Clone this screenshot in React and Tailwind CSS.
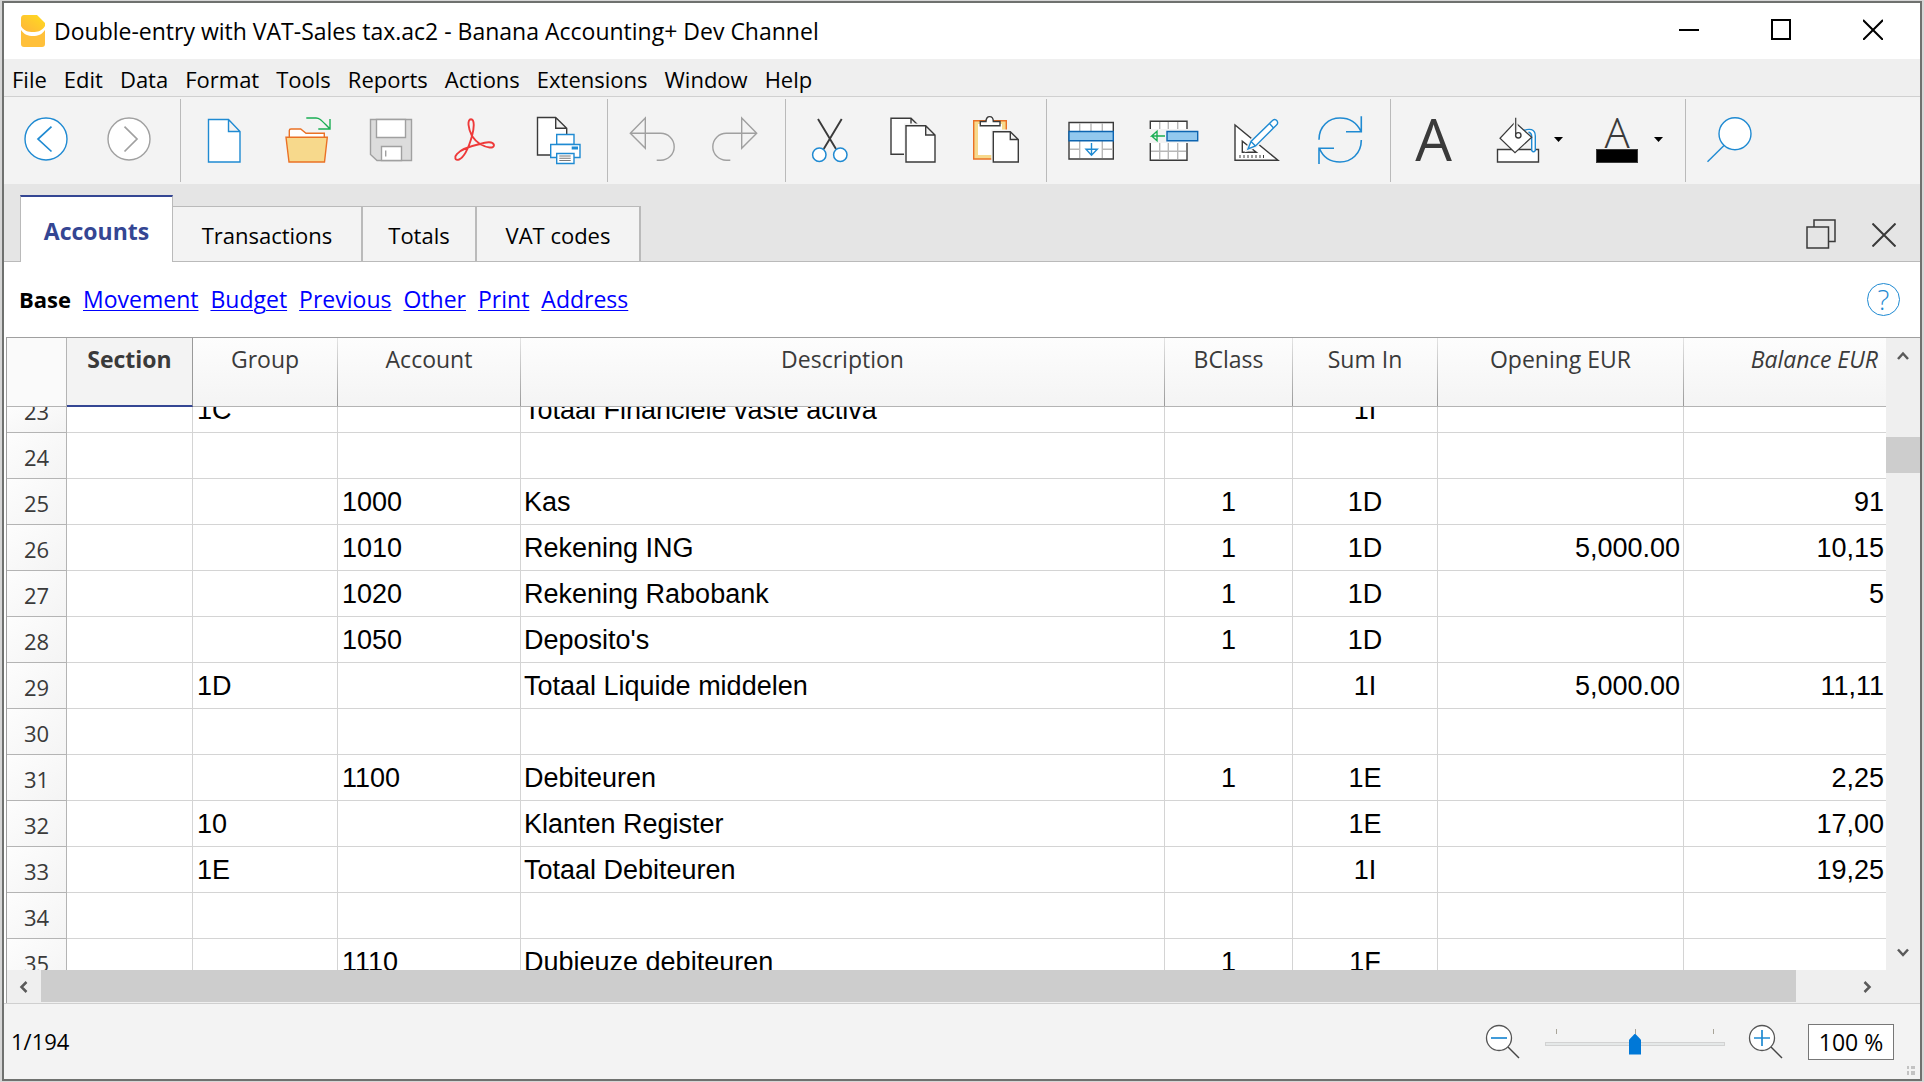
import React from "react";

const BLUE = "#1f8ad2";
const GREY = "#a0a0a0";
const DARK = "#3a3a3a";

function Icon({ children }) {
  return (
    <svg viewBox="0 0 48 48" fill="none" strokeWidth="1.4" className="h-12 w-12 shrink-0 overflow-visible" aria-hidden="true">
      {children}
    </svg>
  );
}

function Logo() {
  return (
    <svg viewBox="0 0 24 32" className="h-8 w-6" aria-hidden="true">
      <defs>
        <linearGradient id="peel" x1="0" y1="1" x2="1" y2="0">
          <stop offset="0" stopColor="#ffb43c" />
          <stop offset="1" stopColor="#ffdc1e" />
        </linearGradient>
      </defs>
      <path d="M0 3.500C0 1.500 1 0 3 0H16L24 8V11C21 16 16.500 17 12 17S2.500 16 0 11Z" fill="url(#peel)" />
      <path d="M0 15C3 19.500 7 21 12 21S21 19.500 24 15V29C24 31 23 32 21 32H3C1 32 0 31 0 29Z" fill="#ffc03a" />
    </svg>
  );
}

const icons = {
  back: (
    <g stroke={BLUE}>
      <circle cx="24" cy="23" r="21" fill="#fff" />
      <path d="M29.500 10.700 16 23 29.500 35.500" strokeWidth="1.700" />
    </g>
  ),
  forward: (
    <g stroke={GREY}>
      <circle cx="24" cy="23" r="21" fill="#fff" />
      <path d="M19.500 10.700 32 23 19.500 35.500" strokeWidth="1.700" />
    </g>
  ),
  newFile: (
    <path d="M8.500 3.500H28.500L40 15.500V46H8.500ZM28.500 3.500V15.500H40" stroke={BLUE} fill="#fff" />
  ),
  open: (
    <g>
      <path d="M6.300 22V14.500Q6.300 13 8 13H17.700L23 17.300H41.300V22" fill="#fff" stroke="#ea7125" />
      <path d="M3 21.300H44.300L41.500 46H6Z" fill="#f7d98c" stroke="#ea7125" />
      <path d="M23.300 2H33C37 2 38.500 4.500 47 13M47 3V13H35.300" stroke="#1aae54" />
    </g>
  ),
  save: (
    <g stroke={GREY}>
      <path d="M4.500 3.500H45.500V44.500H11L4.500 38.500Z" fill="#dcdcdc" />
      <path d="M10.500 3.500H39.500V21.500H10.500ZM15.500 44.500V30.500H35.500V44.500Z" fill="#fff" />
      <path d="M19.700 34.500V40.500" />
    </g>
  ),
  pdf: (
    <path
      d="M23 20C19 12 18 3.500 22 3.300C26 3.500 25 13 23 20C21 27 16 41 10 43.500C6 45 5 41 8 38C12 33 22 30 31 28C38 25.500 44 25.500 45 29C45 33 38 32 31 28C27 25.500 25 23 23 20Z"
      stroke="#ee3a3a"
      strokeWidth="1.900"
    />
  ),
  print: (
    <g>
      <path d="M5.500 1.500H23.700L34.700 12.300V39H5.500ZM23.700 1.500V12.300H34.700" fill="#fff" stroke={DARK} />
      <g stroke={BLUE} fill="#fff">
        <path d="M24.700 18.500H42V28.500H24.700Z" />
        <path d="M18.700 28.500H48V41.500H18.700Z" />
        <path d="M24.700 37.500H42V47.500H24.700Z" />
      </g>
      <path d="M39.700 30.500H46V33.500H39.700Z" fill={BLUE} />
      <path d="M27.300 40H38.700M27.300 42.300H38.700M27.300 44.500H38.700" stroke="#777" strokeWidth="1.100" />
    </g>
  ),
  undo: <path d="M18.300 2 3.300 17.300 18.300 32.300ZM3.300 17.300H33.700A13.500 13.500 0 0 1 33.700 44.300H29.700" stroke={GREY} />,
  redo: <path d="M31.700 2 46.700 17.300 31.700 32.300ZM46.700 17.300H16.300A13.500 13.500 0 0 0 16.300 44.300H20.300" stroke={GREY} />,
  cut: (
    <g>
      <path d="M13 3 31 33M36.700 3 18.700 33" stroke={DARK} strokeWidth="1.900" />
      <g fill="#fff" stroke={BLUE} strokeWidth="1.500">
        <circle cx="14.300" cy="38.700" r="6.700" />
        <circle cx="35.300" cy="38.700" r="6.700" />
      </g>
    </g>
  ),
  copy: (
    <g>
      <path d="M3 2.200H23L31 10V38.300H3ZM23 2.200V10H31" fill="#fff" stroke={DARK} />
      <path d="M16 7.500H40V47H16Z" fill="#f3f3f3" />
      <path d="M18 9.700H37.700L47 19V46H18ZM37.700 9.700V19H47" fill="#fff" stroke={DARK} />
    </g>
  ),
  paste: (
    <g>
      <path d="M2.700 4.700H35.300V43H2.700Z" fill="#f7d98c" stroke="#ea7125" />
      <path d="M7 8H31V39H7Z" fill="#fff" />
      <path d="M9.300 5.500H15C15 -1 22.300 -1 22.300 5.500H29V9.700H9.300Z" fill="#fff" stroke={DARK} />
      <path d="M20.300 13.500H38V47H20.300Z" fill="#f3f3f3" />
      <path d="M22.300 15.700H39.300L47.300 23.500V46H22.300ZM39.300 15.700V23.500H47.300" fill="#fff" stroke={DARK} />
    </g>
  ),
  insertRow: (
    <g>
      <path d="M3 6.500H47.300V43H3Z" fill="#fff" stroke={DARK} />
      <path d="M13.700 7V15M25 7V15M36.300 7V15M13.700 25V42M36.300 25V42M4 33.300H13.700M36.300 33.300H47" stroke="#b8b8b8" />
      <path d="M3 15.500H47.300V24.700H3Z" fill="#92c8ee" stroke="#0c64b0" />
      <path d="M25.500 27V39M20 33.300H31.300L25.500 39.300Z" stroke={BLUE} />
    </g>
  ),
  moveRow: (
    <g>
      <path d="M1.300 13V5.300H38V13M1.300 27V44.300H38V27" fill="#fff" stroke={DARK} />
      <path d="M10.700 6V13M19.300 6V13M28.700 6V13M10.700 27V43M19.300 27V43M28.700 27V43M2 35.300H37" stroke="#b8b8b8" />
      <path d="M18 15.500H48.700V24.700H18Z" fill="#92c8ee" stroke="#0c64b0" />
      <path d="M16 20H2.700L8 15.300V24.700L2.700 20" stroke="#1aae54" />
    </g>
  ),
  design: (
    <g>
      <path d="M3 9V44.300H46ZM10.300 25.300V36.300H24.300Z" fill="#fff" stroke={DARK} />
      <path d="M8 39V42M12 39V42M16 39V42M20 39V42M24 39V42M28 39V42M31.500 39V42" stroke={DARK} strokeWidth="1" />
      <path d="M16 33 19 25.500 40.500 4.500Q43 2.500 45 4.800Q46.500 7 44.500 9L23.500 30ZM19 25.500 23.500 30M37.500 7.500 41.500 12" fill="#fff" stroke="#f3f3f3" strokeWidth="4" />
      <path d="M16 33 19 25.500 40.500 4.500Q43 2.500 45 4.800Q46.500 7 44.500 9L23.500 30ZM19 25.500 23.500 30M37.500 7.500 41.500 12" fill="#fff" stroke={BLUE} />
    </g>
  ),
  refresh: (
    <path
      d="M4 23.700C4 10 14 2 25 2C35 2 42 7 46 15.500M31 15.700H46.300V.3M46.300 24C46.300 38 36 46 25 46C15 46 8 41 4.500 32.500M19 32.300H4V48"
      stroke={BLUE}
      strokeWidth="1.600"
    />
  ),
  fill: (
    <g>
      <path d="M4.500 33.500H45.500V46H4.500Z" fill="#fff" stroke={DARK} />
      <path d="M31 14.500C36 12.500 42.300 12.500 42.300 20V34.500Q40.500 37 38.700 34.500V20Q38.500 17 35.500 16" fill="#fff" stroke={BLUE} />
      <path d="M22 6.300 38.700 21.300 22 36.700 7 22.300Z" fill="#fff" stroke={DARK} strokeWidth="1.200" />
      <path d="M22.700 0V14" stroke="#f3f3f3" strokeWidth="4" />
      <path d="M22.700 1.700V18" stroke={DARK} strokeWidth="1.200" />
      <circle cx="25.300" cy="19.300" r="2.700" stroke={DARK} />
    </g>
  ),
  search: (
    <g stroke={BLUE}>
      <circle cx="30" cy="17.700" r="16" fill="#fff" />
      <path d="M19 29.500 2.500 45.700" />
    </g>
  ),
};

const toolbarGroups = [
  [["Back", "back"], ["Forward", "forward"]],
  [["New", "newFile"], ["Open", "open"], ["Save", "save"], ["Export PDF", "pdf"], ["Print", "print"]],
  [["Undo", "undo"], ["Redo", "redo"]],
  [["Cut", "cut"], ["Copy", "copy"], ["Paste", "paste"]],
  [["Add rows", "insertRow"], ["Insert rows", "moveRow"], ["Design", "design"], ["Recalculate", "refresh"]],
];

function ToolButton({ label, name }) {
  return (
    <button type="button" aria-label={label} className="flex w-[83px] items-center justify-center pb-0.5">
      <Icon>{icons[name]}</Icon>
    </button>
  );
}

function Separator() {
  return <div className="my-0.5 mr-px ml-[10px] w-px shrink-0 bg-[#bababa]" />;
}

function Caret() {
  return (
    <svg viewBox="0 0 9 5" className="h-[5px] w-[9px]" aria-hidden="true">
      <path d="M0 0H9L4.500 5Z" fill="#000" />
    </svg>
  );
}

function Toolbar() {
  return (
    <div role="toolbar" className="flex h-[88px] shrink-0 items-stretch border-t border-[#d0d0d0] bg-[#f3f3f3]">
      {toolbarGroups.map((group, i) => (
        <React.Fragment key={i}>
          {group.map(([label, name]) => (
            <ToolButton key={name} label={label} name={name} />
          ))}
          <Separator />
        </React.Fragment>
      ))}
      <button type="button" aria-label="Bold" className="flex w-[83px] items-center justify-center pb-1 text-[58px] leading-[48px] text-[#3a3a3a]">
        A
      </button>
      <button type="button" aria-label="Background colour" className="flex w-[101px] items-center gap-[13px] pb-0.5 pl-[18px]">
        <Icon>{icons.fill}</Icon>
        <Caret />
      </button>
      <button type="button" aria-label="Text colour" className="flex w-[99px] items-center gap-[13px] pb-0.5 pl-[17px]">
        <span className="flex h-12 w-12 flex-col items-center justify-end pb-px">
          <span className="font-['Open_Sans_Light','Open_Sans'] text-[42px] leading-[35px] font-light text-[#3a3a3a]">A</span>
          <span className="h-[14px] w-[42px] shrink-0 border border-[#3a3a3a] bg-black" />
        </span>
        <Caret />
      </button>
      <Separator />
      <ToolButton label="Search" name="search" />
    </div>
  );
}

const menus = ["File", "Edit", "Data", "Format", "Tools", "Reports", "Actions", "Extensions", "Window", "Help"];
const views = ["Movement", "Budget", "Previous", "Other", "Print", "Address"];

const rows = [
  [23, "1C", "", "Totaal Financiële vaste activa", "", "1I", "", ""],
  [24, "", "", "", "", "", "", ""],
  [25, "", "1000", "Kas", "1", "1D", "", "91"],
  [26, "", "1010", "Rekening ING", "1", "1D", "5,000.00", "10,15"],
  [27, "", "1020", "Rekening Rabobank", "1", "1D", "", "5"],
  [28, "", "1050", "Deposito's", "1", "1D", "", ""],
  [29, "1D", "", "Totaal Liquide middelen", "", "1I", "5,000.00", "11,11"],
  [30, "", "", "", "", "", "", ""],
  [31, "", "1100", "Debiteuren", "1", "1E", "", "2,25"],
  [32, "10", "", "Klanten Register", "", "1E", "", "17,00"],
  [33, "1E", "", "Totaal Debiteuren", "", "1I", "", "19,25"],
  [34, "", "", "", "", "", "", ""],
  [35, "", "1110", "Dubieuze debiteuren", "1", "1F", "", ""],
];

function Cell({ children, clipped, className = "px-[3px]" }) {
  return (
    <td className="border-r border-b border-[#d4d4d4] p-0 last:border-r-0">
      <div className={`flex items-end overflow-hidden ${clipped ? "h-[25px]" : "h-[45px]"} ${className}`}>
        <span className="shrink-0 pt-0.5 leading-[43px] whitespace-nowrap">{children}</span>
      </div>
    </td>
  );
}

function HeadCell({ children, last }) {
  return (
    <th scope="col" className="border-b border-[#b4b4b4] bg-linear-to-b from-[#fdfdfd] to-[#f4f4f4] p-0 align-top font-normal">
      <div className="flex h-[68px]">
        <div className={`flex-1 pt-1 leading-[34px] ${last ? "pr-2 text-right italic" : "text-center"}`}>{children}</div>
        {!last && <div className="w-px bg-linear-to-b from-[#e4e4e4] to-[#9a9a9a]" />}
      </div>
    </th>
  );
}

function AccountsTable() {
  return (
    <table className="w-full table-fixed border-separate border-spacing-0 text-[27px] text-black [font-family:'Liberation_Sans',Arial,sans-serif]">
      <colgroup>
        <col className="w-[60px]" />
        <col className="w-[126px]" />
        <col className="w-[145px]" />
        <col className="w-[183px]" />
        <col />
        <col className="w-[128px]" />
        <col className="w-[145px]" />
        <col className="w-[246px]" />
        <col className="w-[202px]" />
      </colgroup>
      <thead className="text-[23px] text-[#3a3a3a] [font-family:'Open_Sans','Noto_Sans',sans-serif]">
        <tr>
          <th aria-label="Row" className="border-r border-b border-[#b4b4b4] bg-[#fafafa] p-0" />
          <th scope="col" className="border-r border-b-2 border-r-[#9a9a9a] border-b-[#344693] bg-[#f3f3f3] p-0 pt-1 align-top leading-[34px] font-bold">
            Section
          </th>
          <HeadCell>Group</HeadCell>
          <HeadCell>Account</HeadCell>
          <HeadCell>Description</HeadCell>
          <HeadCell>BClass</HeadCell>
          <HeadCell>Sum In</HeadCell>
          <HeadCell>Opening EUR</HeadCell>
          <HeadCell last>Balance EUR</HeadCell>
        </tr>
      </thead>
      <tbody>
        {rows.map(([no, group, account, description, bclass, sumIn, opening, balance], i) => {
          const clipped = i === 0;
          return (
            <tr key={no}>
              <th
                scope="row"
                className="border-r border-b border-[#b4b4b4] bg-linear-to-br from-[#fdfdfd] to-[#f4f4f4] p-0 text-[22px] font-normal text-[#3a3a3a] [font-family:'Open_Sans','Noto_Sans',sans-serif]"
              >
                <div className={`flex items-end justify-center overflow-hidden ${clipped ? "h-[25px]" : "h-[45px]"}`}>
                  <span className="shrink-0 pt-1 leading-[41px]">{no}</span>
                </div>
              </th>
              <Cell clipped={clipped} />
              <Cell clipped={clipped} className="px-1">{group}</Cell>
              <Cell clipped={clipped} className="px-1">{account}</Cell>
              <Cell clipped={clipped}>{description}</Cell>
              <Cell clipped={clipped} className="justify-center">{bclass}</Cell>
              <Cell clipped={clipped} className="justify-center">{sumIn}</Cell>
              <Cell clipped={clipped} className="justify-end pr-[3px]">{opening}</Cell>
              <Cell clipped={clipped} className="justify-end pr-0.5">{balance}</Cell>
            </tr>
          );
        })}
      </tbody>
    </table>
  );
}

function Chevron({ d, className }) {
  return (
    <svg viewBox="0 0 12 12" fill="none" stroke="#5a5a5a" strokeWidth="2.500" className={className} aria-hidden="true">
      <path d={d} />
    </svg>
  );
}

function Magnifier({ sign }) {
  return (
    <svg viewBox="0 0 36 36" fill="none" className="h-9 w-9" aria-hidden="true">
      <circle cx="14" cy="14" r="12.500" fill="#fff" stroke="#555" strokeWidth="1.300" />
      <path d="M23 23 34 34" stroke="#444" strokeWidth="1.400" />
      <path d={sign} stroke={BLUE} strokeWidth="1.700" />
    </svg>
  );
}

function StatusBar() {
  return (
    <footer className="flex h-[76px] shrink-0 items-center border-t border-[#cfcfcf] bg-[#f3f3f3] pl-[7px]">
      <span>1/194</span>
      <div className="ml-auto flex items-center">
        <button type="button" aria-label="Zoom out">
          <Magnifier sign="M6 14H22" />
        </button>
        <div className="relative ml-6 h-9 w-[180px]">
          <div className="flex justify-between px-[11px] pt-[5px]">
            <span className="h-[5px] w-px bg-[#a8a498]" />
            <span className="h-[5px] w-px bg-[#a8a498]" />
            <span className="h-[5px] w-px bg-[#a8a498]" />
          </div>
          <input
            type="range"
            aria-label="Zoom"
            min="0"
            max="200"
            defaultValue="100"
            className="absolute inset-x-0 top-[9px] m-0 h-[22px] w-full appearance-none bg-transparent [&::-webkit-slider-runnable-track]:h-1 [&::-webkit-slider-runnable-track]:border [&::-webkit-slider-runnable-track]:border-[#d2d2d2] [&::-webkit-slider-runnable-track]:bg-[#e5e8e8] [&::-webkit-slider-thumb]:-mt-[9px] [&::-webkit-slider-thumb]:h-[21px] [&::-webkit-slider-thumb]:w-3 [&::-webkit-slider-thumb]:appearance-none [&::-webkit-slider-thumb]:bg-[#0078d7] [&::-webkit-slider-thumb]:[clip-path:polygon(50%_0,100%_30%,100%_100%,0_100%,0_30%)]"
          />
        </div>
        <button type="button" aria-label="Zoom in" className="ml-[23px]">
          <Magnifier sign="M6 14H22M14 6V22" />
        </button>
        <button type="button" className="mr-[13px] ml-6 h-9 w-[86px] border border-[#777] bg-white text-center text-[23px] leading-8 whitespace-nowrap">
          100 %
        </button>
      </div>
      <svg viewBox="0 0 9 9" fill="#c3c3c3" className="mr-1 mb-1 h-[9px] w-[9px] self-end" aria-hidden="true">
        <path d="M0 0H2V3H0ZM4 0H8V3H4ZM0 5H2V9H0ZM4 5H8V9H4Z" />
      </svg>
    </footer>
  );
}

function Tab({ children, className }) {
  return (
    <button
      type="button"
      role="tab"
      aria-selected="false"
      className={`h-[55px] shrink-0 self-end border-t border-r-2 border-[#bababa] bg-[#f3f3f3] pt-0.5 whitespace-nowrap ${className}`}
    >
      {children}
    </button>
  );
}

export default function App() {
  return (
    <div className="h-screen bg-[#d6d6d6] px-0.5 py-px text-[22px] text-black [font-family:'Open_Sans','Noto_Sans',sans-serif]">
      <div className="flex h-full flex-col overflow-hidden border-2 border-[#6f716f] bg-white">
        <header className="flex h-14 shrink-0 items-center pl-[17px]">
          <Logo />
          <h1 className="ml-[9px] text-[23px] whitespace-nowrap">Double-entry with VAT-Sales tax.ac2 - Banana Accounting+ Dev Channel</h1>
          <div className="mr-[37px] mb-1 ml-auto flex items-center gap-[72px]">
            {[
              ["Minimize", "M0 11H20"],
              ["Maximize", "M1 1H19V20H1Z"],
              ["Close", "M0 1 20 21M20 1 0 21"],
            ].map(([label, d]) => (
              <button key={label} type="button" aria-label={label} className="h-[21px] w-5">
                <svg viewBox="0 0 20 21" fill="none" stroke="#000" strokeWidth="2" className="h-[21px] w-5" aria-hidden="true">
                  <path d={d} />
                </svg>
              </button>
            ))}
          </div>
        </header>

        <nav aria-label="Menu" className="flex h-[37px] shrink-0 items-center gap-[17px] bg-[#efefef] pl-2">
          {menus.map((m) => (
            <button key={m} type="button" className="pt-1">
              {m}
            </button>
          ))}
        </nav>

        <Toolbar />

        <div className="flex h-[78px] shrink-0 bg-[#e5e5e5]">
          <div className="w-4 border-b border-[#bababa]" />
          <div role="tablist" className="flex">
            <button
              type="button"
              role="tab"
              aria-selected="true"
              className="mt-[11px] w-[153px] border-x border-t-2 border-x-[#bababa] border-t-[#344693] bg-white pt-1 text-[23px] font-bold text-[#344693]"
            >
              Accounts
            </button>
            <div className="flex border-b border-[#bababa]">
              <Tab className="w-[190px]">Transactions</Tab>
              <Tab className="w-[114px]">Totals</Tab>
              <Tab className="w-[164px]">VAT codes</Tab>
            </div>
          </div>
          <div className="flex flex-1 items-end justify-end gap-9 border-b border-[#bababa] pr-6 pb-3">
            <button type="button" aria-label="Restore" className="h-[30px]">
              <svg viewBox="0 0 30 30" fill="none" stroke={DARK} strokeWidth="1.500" className="h-[30px] w-[30px]" aria-hidden="true">
                <path d="M1 8H22.500V29H1ZM8 8V1H29V22.500H22.500" />
              </svg>
            </button>
            <button type="button" aria-label="Close tab" className="h-7">
              <svg viewBox="0 0 24 24" fill="none" stroke={DARK} strokeWidth="2" className="h-6 w-6" aria-hidden="true">
                <path d="M.5.5 23.500 23.500M23.500.5.5 23.500" />
              </svg>
            </button>
          </div>
        </div>

        <div className="flex h-[75px] shrink-0 items-center gap-3 pr-5 pl-[15px] text-[23px]">
          <strong className="text-[22px] font-bold">Base</strong>
          {views.map((v) => (
            <a key={v} href={`#${v.toLowerCase()}`} className="text-[#0000ff] underline decoration-1 underline-offset-2">
              {v}
            </a>
          ))}
          <button
            type="button"
            aria-label="Help"
            className="mb-px ml-auto flex h-[33px] w-[33px] items-center justify-center rounded-full border border-[#1f8ad2] text-[28px] leading-none font-light text-[#1f8ad2]"
          >
            ?
          </button>
        </div>

        <main className="ml-0.5 flex min-h-0 flex-1 flex-col border-t border-l border-[#a0a0a0]">
          <div className="flex min-h-0 flex-1">
            <div className="min-w-0 flex-1 overflow-hidden">
              <AccountsTable />
            </div>
            <div className="flex w-[34px] shrink-0 flex-col items-center bg-[#efefef]">
              <div className="flex h-[99px] items-start pt-3">
                <Chevron d="M1 9 6 3.500 11 9" className="h-3 w-3" />
              </div>
              <div className="h-9 w-full bg-[#cdcdcd]" />
              <Chevron d="M1 3.500 6 9 11 3.500" className="mt-auto mb-3 h-3 w-3" />
            </div>
          </div>
          <div className="flex h-[33px] shrink-0 items-center bg-[#efefef]">
            <div className="flex w-[34px] justify-center">
              <Chevron d="M8.500 1 3.500 6 8.500 11" className="h-3 w-3" />
            </div>
            <div className="mb-px h-8 flex-1 bg-[#cdcdcd]" />
            <div className="flex w-[124px] justify-end pr-[47px]">
              <Chevron d="M3.500 1 8.500 6 3.500 11" className="h-3 w-3" />
            </div>
          </div>
        </main>

        <StatusBar />
      </div>
    </div>
  );
}
